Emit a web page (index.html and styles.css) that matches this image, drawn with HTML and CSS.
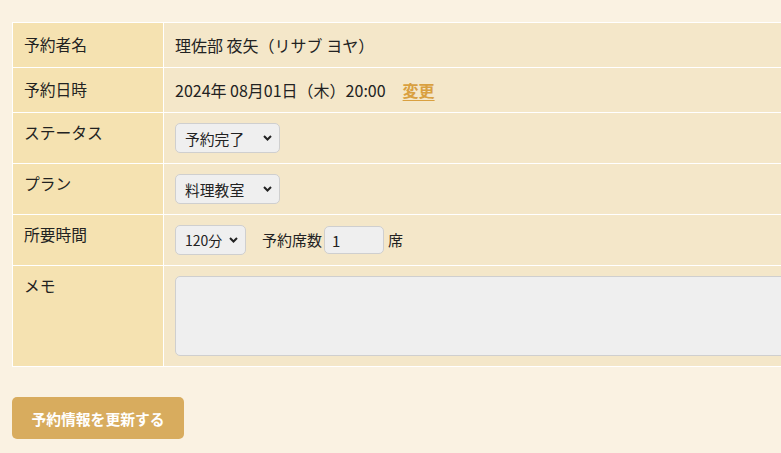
FILE: index.html
```html
<!DOCTYPE html>
<html lang="ja">
<head>
<meta charset="utf-8">
<title>予約情報</title>
<link rel="stylesheet" href="styles.css">
</head>
<body>
<div class="page">
  <table class="info">
    <tr class="text-row">
      <th class="label">予約者名</th>
      <td class="value">理佐部 夜矢（リサブ ヨヤ）</td>
    </tr>
    <tr class="text-row">
      <th class="label">予約日時</th>
      <td class="value">2024年 08月01日（木）20:00<a class="change" href="#">変更</a></td>
    </tr>
    <tr>
      <th class="label">ステータス</th>
      <td class="value">
        <select class="sel sel-wide"><option>予約完了</option></select>
      </td>
    </tr>
    <tr>
      <th class="label">プラン</th>
      <td class="value">
        <select class="sel sel-wide"><option>料理教室</option></select>
      </td>
    </tr>
    <tr>
      <th class="label">所要時間</th>
      <td class="value">
        <div class="inline">
          <select class="sel sel-short"><option>120分</option></select>
          <span class="seat-label">予約席数</span>
          <input class="num" type="text" value="1">
          <span class="unit">席</span>
        </div>
      </td>
    </tr>
    <tr>
      <th class="label">メモ</th>
      <td class="value"><textarea class="memo"></textarea></td>
    </tr>
  </table>
  <button class="submit" type="button">予約情報を更新する</button>
</div>
</body>
</html>
```
FILE: styles.css
```css
html, body {
  margin: 0;
  padding: 0;
  background: #faf2e2;
  overflow: hidden;
}
body {
  font-family: "Noto Sans CJK JP", "Liberation Sans", sans-serif;
  color: #222;
  font-size: 16px;
}
.page {
  padding: 22px 0 0 12px;
  width: 1100px;
}
.info {
  border-collapse: collapse;
  width: 1000px;
}
.info th, .info td {
  border: 1px solid #fff;
  padding: 10px 11px;
  text-align: left;
  font-weight: normal;
  line-height: 20px;
}
.label {
  width: 128px;
  background: #f5e2b1;
  vertical-align: top;
  font-size: 15.75px;
}
.value {
  background: #f4e7c9;
  vertical-align: middle;
  font-size: 16px;
}
.text-row .label, .text-row .value {
  line-height: 24px;
  vertical-align: middle;
}
.change {
  color: #d9a040;
  font-weight: bold;
  margin-left: 17px;
  text-decoration: underline;
  text-underline-offset: 3px;
}
.sel {
  appearance: none;
  -webkit-appearance: none;
  height: 30px;
  border: 1px solid #cfcfcf;
  border-radius: 5px;
  background-color: #efefef;
  background-image: url("data:image/svg+xml;utf8,<svg xmlns='http://www.w3.org/2000/svg' width='9' height='6' viewBox='0 0 9 6'><path d='M1 1 L4.5 4.5 L8 1' fill='none' stroke='%23222' stroke-width='2'/></svg>");
  background-repeat: no-repeat;
  background-position: right 7px center;
  font-family: inherit;
  font-size: 14.8px;
  color: #222;
  padding: 0 0 0 9px;
  display: block;
}
.sel-wide { width: 105px; }
.sel-short { width: 71px; font-size: 14px; }
.inline {
  display: flex;
  align-items: center;
}
.seat-label {
  margin-left: 16px;
  font-size: 15px;
}
.num {
  width: 60px;
  height: 28px;
  box-sizing: border-box;
  margin-left: 2px;
  border: 1px solid #cfcfcf;
  border-radius: 5px;
  background: #efefef;
  font-family: inherit;
  font-size: 15px;
  padding: 0 7px;
  color: #222;
}
.unit {
  margin-left: 4px;
  font-size: 15px;
}
.memo {
  display: block;
  width: 800px;
  height: 80px;
  box-sizing: border-box;
  border: 1px solid #cfcfcf;
  border-radius: 5px;
  background: #efefef;
  resize: none;
}
.submit {
  margin-top: 30px;
  width: 172px;
  height: 42px;
  border: none;
  border-radius: 5px;
  background: #d8ac5e;
  color: #fff;
  font-family: inherit;
  font-weight: bold;
  font-size: 14.8px;
}
```
